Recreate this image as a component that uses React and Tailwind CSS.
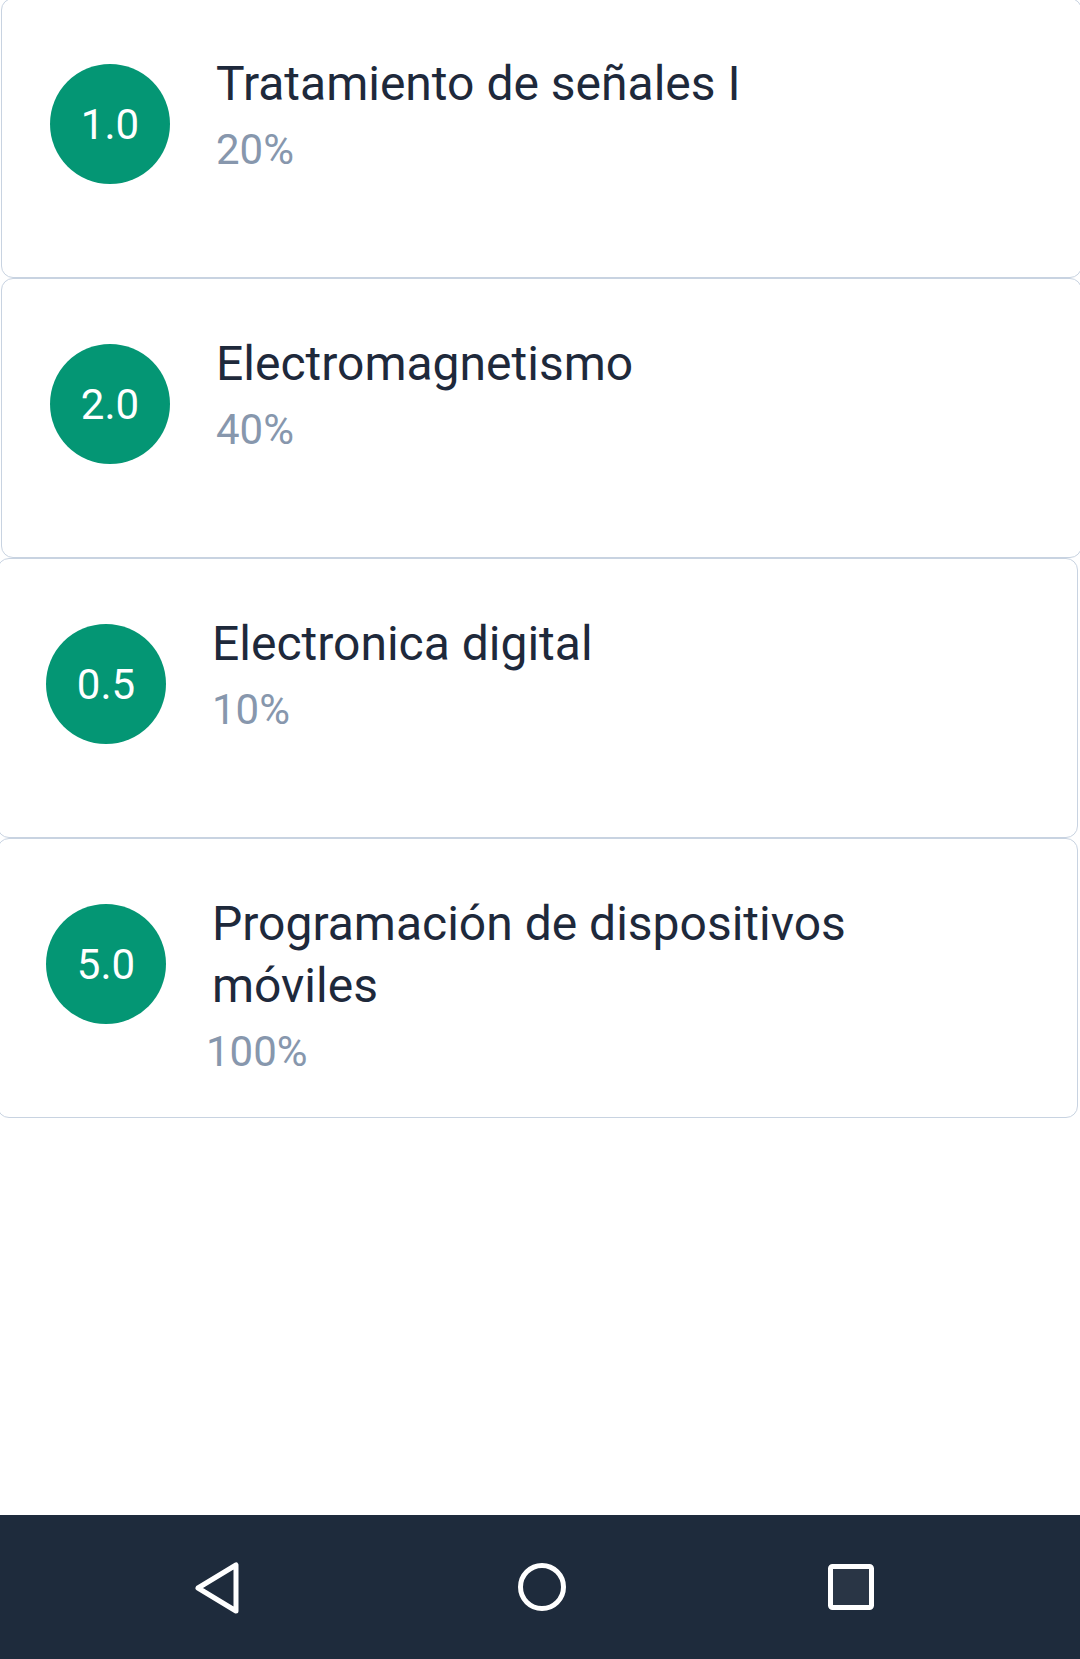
import React from "react";

const items = [
  { grade: "1.0", title: "Tratamiento de señales I", pct: "20%", shift: "ml-[1px]", pctShift: "" },
  { grade: "2.0", title: "Electromagnetismo", pct: "40%", shift: "ml-[1px]", pctShift: "" },
  { grade: "0.5", title: "Electronica digital", pct: "10%", shift: "ml-[-3px]", pctShift: "" },
  { grade: "5.0", title: "Programación de dispositivos móviles", pct: "100%", shift: "ml-[-3px]", pctShift: "ml-[-6px]" },
];

function Card({ item }) {
  return (
    <div
      className={`${item.shift} h-[280px] w-[1081px] shrink-0 rounded-[12px] border border-[#c8d3e1] bg-white flex items-start pl-[48px] pt-[53px]`}
    >
      <div className="mt-[12px] w-[120px] h-[120px] shrink-0 rounded-full bg-[#049674] flex items-center justify-center">
        <span className="mt-[2px] text-white text-[42px] leading-none">{item.grade}</span>
      </div>
      <div className="ml-[46px] mt-[1px] w-[720px] flex flex-col">
        <div className="text-[48px] leading-[62px] text-[#1e293b]">{item.title}</div>
        <div className={`${item.pctShift} text-[42px] leading-[70px] text-[#8797ad]`}>{item.pct}</div>
      </div>
    </div>
  );
}

export default function App() {
  return (
    <div
      className="w-[1080px] h-[1659px] overflow-hidden bg-white flex flex-col"
      style={{ fontFamily: "Roboto, 'Noto Sans', sans-serif" }}
    >
      <div className="flex-1 flex flex-col">
        <div className="mt-[-2px] flex flex-col">
          {items.map((it) => (
            <Card key={it.title} item={it} />
          ))}
        </div>
      </div>
      <nav className="h-[144px] shrink-0 bg-[#1e2b3c] flex items-center pl-[192px]">
        <svg width="48" height="56" viewBox="0 0 48 56" fill="none">
          <path d="M6 29 L44 6 L44 52 Z" stroke="white" strokeWidth="5" strokeLinejoin="round" />
        </svg>
        <svg className="ml-[276px]" width="52" height="52" viewBox="0 0 52 52" fill="none">
          <circle cx="26" cy="26" r="21.5" stroke="white" strokeWidth="5" />
        </svg>
        <svg className="ml-[257px]" width="52" height="52" viewBox="0 0 52 52" fill="none">
          <rect x="5.5" y="5.5" width="41" height="41" rx="2" fill="white" fillOpacity="0.05" stroke="white" strokeWidth="5" />
        </svg>
      </nav>
    </div>
  );
}
